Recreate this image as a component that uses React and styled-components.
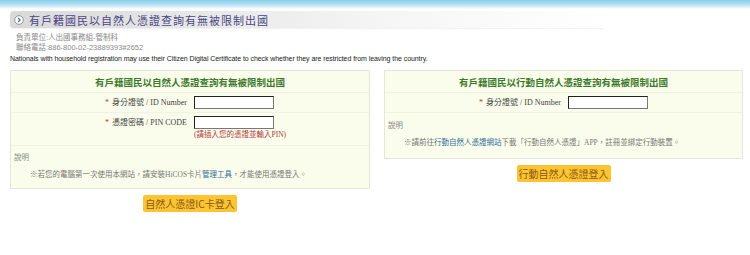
import React from "react";
import styled, { createGlobalStyle } from "styled-components";

const GlobalStyle = createGlobalStyle`
  html, body {
    margin: 0;
    padding: 0;
    background: #ffffff;
    width: 750px;
    height: 255px;
    overflow: hidden;
  }
  body {
    font-family: "Liberation Serif", "Noto Sans CJK TC", serif;
  }
`;

const Page = styled.div`
  width: 750px;
  display: flex;
  flex-direction: column;
`;

const TopBar = styled.div`
  height: 9px;
  background: linear-gradient(to bottom, #86cdea 0%, #b9e3f4 55%, #ffffff 100%);
`;

const TitleBar = styled.div`
  margin: 2px 0 0 10px;
  width: 590px;
  height: 17px;
  display: flex;
  align-items: center;
  gap: 5px;
  padding-left: 4px;
  border-radius: 4px 0 0 4px;
  background: linear-gradient(to right, #d9d9d9 0%, #e9e9e9 35%, #f6f6f6 65%, rgba(255, 255, 255, 0) 100%);
  box-shadow: 0 1px 1px rgba(0, 0, 0, 0.06);
`;

const Title = styled.h1`
  margin: 0;
  font-size: 11px;
  font-weight: normal;
  letter-spacing: 1px;
  color: #4a4886;
  font-family: "Liberation Serif", "Noto Sans CJK TC", serif;
`;

const Info = styled.div`
  margin: 5px 0 0 16px;
  font-size: 7.5px;
  line-height: 10px;
  color: #8a8a8a;
  font-family: "Liberation Sans", "Noto Sans CJK TC", sans-serif;
`;

const English = styled.p`
  margin: 1px 0 0 10px;
  font-size: 7px;
  letter-spacing: -0.07px;
  line-height: 10px;
  color: #222;
  font-family: "Liberation Sans", sans-serif;
`;

const Columns = styled.div`
  margin-top: 6px;
  padding: 0 7px 0 10px;
  display: grid;
  grid-template-columns: 360px 359px;
  align-items: start;
  gap: 14px;
`;

const Column = styled.div`
  display: flex;
  flex-direction: column;
  align-items: center;
  gap: 6px;
`;

const Panel = styled.section`
  width: 100%;
  box-sizing: border-box;
  background: #fafdeb;
  border: 1px solid #e4e7d8;
`;

const PanelTitle = styled.h2`
  margin: 0;
  height: 21px;
  display: flex;
  align-items: center;
  justify-content: center;
  font-size: 9.5px;
  font-weight: bold;
  color: #3d7a2c;
  border-bottom: 1px solid #f0f2e2;
  font-family: "Noto Sans CJK TC", sans-serif;
`;

const FieldRow = styled.div`
  display: grid;
  grid-template-columns: 176px 1fr;
  column-gap: 7px;
  padding: 3px 0 ${(p) => (p.$last ? "5px" : "3px")};
  border-bottom: 1px solid #f0f2e2;
`;

const Label = styled.label`
  text-align: right;
  font-size: 8px;
  line-height: 13px;
  color: #444;
  font-family: "Liberation Serif", "Noto Sans CJK TC", serif;
`;

const Star = styled.span`
  color: #c0392b;
  margin-right: 3px;
`;

const FieldBox = styled.div`
  display: flex;
  flex-direction: column;
  align-items: flex-start;
`;

const Input = styled.input`
  width: 80px;
  height: 13px;
  box-sizing: border-box;
  padding: 0;
  margin: 0;
  background: #fff;
  border: 1px solid #777;
  border-top-color: #222;
  border-left-color: #222;
`;

const Hint = styled.span`
  margin-top: 1px;
  font-size: 7.5px;
  line-height: 10px;
  color: #b03a3a;
  font-family: "Liberation Serif", "Noto Sans CJK TC", serif;
`;

const Notes = styled.div`
  padding: ${(p) => p.$pad};
  display: flex;
  flex-direction: column;
  gap: 6px;
  font-size: 7.5px;
  line-height: 11px;
  color: #777;
  font-family: "Liberation Serif", "Noto Sans CJK TC", serif;
`;

const NotesHead = styled.div`
  padding-left: 3px;
  color: #888;
`;

const NotesText = styled.div`
  padding-left: 19px;
  color: #777;
`;

const Link = styled.a`
  color: ${(p) => (p.$muted ? "#777" : "#2f6b9a")};
  text-decoration: none;
`;

const LoginButton = styled.button`
  height: 17px;
  padding: 0 2px;
  border: none;
  border-radius: 2px;
  background: #fcc433;
  color: #8b5a12;
  font-size: 10px;
  line-height: 17px;
  font-family: "Noto Sans CJK TC", sans-serif;
  cursor: pointer;
`;

const TitleIcon = () => (
  <svg width="10" height="10" viewBox="0 0 10 10">
    <circle cx="5" cy="5" r="4.3" fill="#fff" stroke="#8c8c8c" strokeWidth="0.9" />
    <path d="M4.2 3 L6 5 L4.2 7" fill="none" stroke="#3a6fa8" strokeWidth="1.2" />
  </svg>
);

const App = () => {
  return (
    <>
      <GlobalStyle />
      <Page>
        <TopBar />
        <TitleBar>
          <TitleIcon />
          <Title>有戶籍國民以自然人憑證查詢有無被限制出國</Title>
        </TitleBar>
        <Info>
          <div>負責單位:人出國事務組-管制科</div>
          <div>聯絡電話:886-800-02-23889393#2652</div>
        </Info>
        <English>
          Nationals with household registration may use their Citizen Digital Certificate to check whether they are restricted from leaving the country.
        </English>
        <Columns>
          <Column>
            <Panel>
              <PanelTitle>有戶籍國民以自然人憑證查詢有無被限制出國</PanelTitle>
              <FieldRow>
                <Label><Star>*</Star>身分證號 / ID Number</Label>
                <FieldBox><Input type="text" /></FieldBox>
              </FieldRow>
              <FieldRow $last>
                <Label><Star>*</Star>憑證密碼 / PIN CODE</Label>
                <FieldBox>
                  <Input type="password" />
                  <Hint>(請插入您的憑證並輸入PIN)</Hint>
                </FieldBox>
              </FieldRow>
              <Notes $pad="6px 0 8px">
                <NotesHead>說明</NotesHead>
                <NotesText>
                  ※若您的電腦第一次使用本網站，請安裝<Link $muted href="#">HiCOS卡片</Link><Link href="#">管理工具</Link>，才能使用憑證登入。
                </NotesText>
              </Notes>
            </Panel>
            <LoginButton>自然人憑證IC卡登入</LoginButton>
          </Column>
          <Column>
            <Panel>
              <PanelTitle>有戶籍國民以行動自然人憑證查詢有無被限制出國</PanelTitle>
              <FieldRow>
                <Label><Star>*</Star>身分證號 / ID Number</Label>
                <FieldBox><Input type="text" /></FieldBox>
              </FieldRow>
              <Notes $pad="7px 0 10px">
                <NotesHead>說明</NotesHead>
                <NotesText>
                  ※請前往<Link href="#">行動自然人憑證網站</Link>下載「行動自然人憑證」APP，註冊並綁定行動裝置。
                </NotesText>
              </Notes>
            </Panel>
            <LoginButton>行動自然人憑證登入</LoginButton>
          </Column>
        </Columns>
      </Page>
    </>
  );
};

export default App;
